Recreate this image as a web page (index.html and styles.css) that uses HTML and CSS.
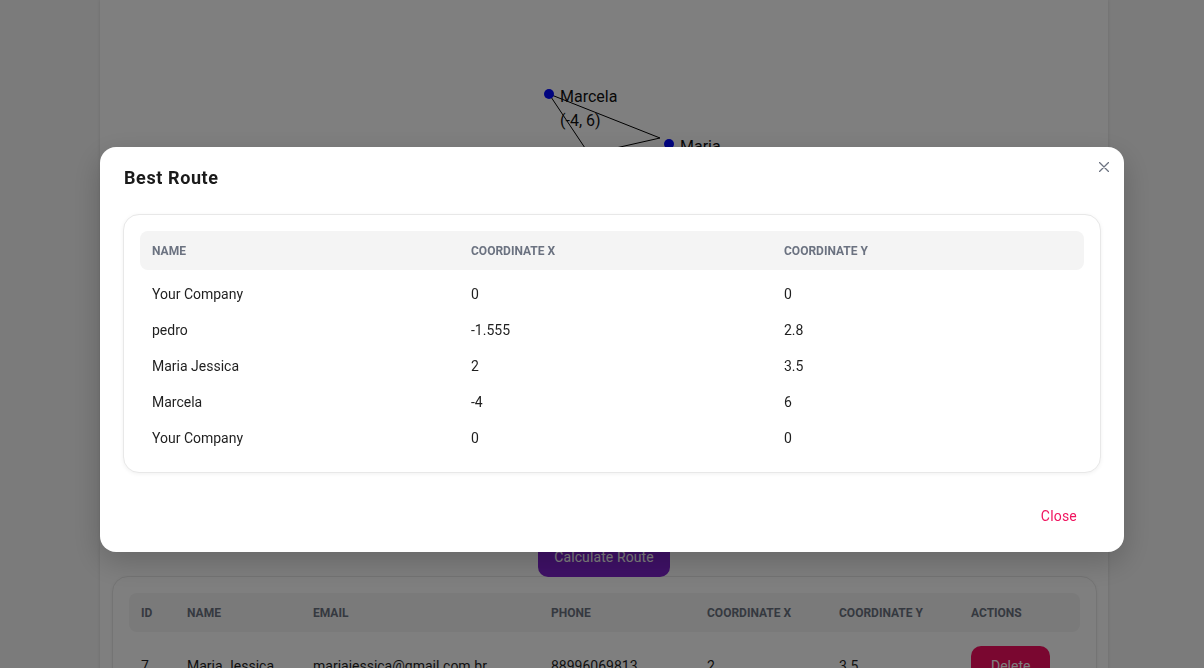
FILE: index.html
```html
<!DOCTYPE html>
<html lang="en">
<head>
<meta charset="utf-8">
<title>Best Route</title>
<link rel="stylesheet" href="styles.css">
</head>
<body>
<main class="page">
  <section class="main-card">
    <div class="chart">
      <svg width="1008" height="537" viewBox="0 0 1008 537">
        <polyline points="449,94 560,138 498,152" fill="none" stroke="#000" stroke-width="1"/>
        <line x1="449" y1="94" x2="529" y2="214" stroke="#000" stroke-width="1"/>
        <circle cx="449" cy="94" r="5" fill="#0008ff"/>
        <circle cx="569" cy="144" r="5" fill="#0008ff"/>
        <text x="460" y="102" class="chart-label">Marcela</text>
        <text x="460" y="126" class="chart-label">(-4, 6)</text>
        <text x="580" y="152" class="chart-label">Maria</text>
      </svg>
    </div>
    <div class="actions-bar">
      <button class="btn-primary">Calculate Route</button>
    </div>
    <div class="table-card bg-table">
      <div class="row head">
        <div>ID</div><div>Name</div><div>Email</div><div>Phone</div><div>Coordinate X</div><div>Coordinate Y</div><div>Actions</div>
      </div>
      <div class="row body">
        <div>7</div><div>Maria Jessica</div><div>mariajessica@gmail.com.br</div><div>88996069813</div><div>2</div><div>3.5</div><div><button class="btn-danger">Delete</button></div>
      </div>
    </div>
  </section>
</main>

<div class="overlay">
  <div class="modal">
    <button class="modal-x" aria-label="close">
      <svg width="10" height="10" viewBox="0 0 10 10"><path d="M0.5 0.5 L9.5 9.5 M9.5 0.5 L0.5 9.5" stroke="#6b7280" stroke-width="1.3" stroke-linecap="round"/></svg>
    </button>
    <h2 class="modal-title">Best Route</h2>
    <div class="modal-body">
      <div class="table-card route-table">
        <div class="row head">
          <div>Name</div><div>Coordinate X</div><div>Coordinate Y</div>
        </div>
        <div class="row body"><div>Your Company</div><div>0</div><div>0</div></div>
        <div class="row body"><div>pedro</div><div>-1.555</div><div>2.8</div></div>
        <div class="row body"><div>Maria Jessica</div><div>2</div><div>3.5</div></div>
        <div class="row body"><div>Marcela</div><div>-4</div><div>6</div></div>
        <div class="row body"><div>Your Company</div><div>0</div><div>0</div></div>
      </div>
    </div>
    <div class="modal-footer">
      <button class="btn-text">Close</button>
    </div>
  </div>
</div>
</body>
</html>
```
FILE: styles.css
```css
* { box-sizing: border-box; }
html, body { margin: 0; padding: 0; }
body {
  background: #f6f6f6;
  font-family: Roboto, "Liberation Sans", sans-serif;
  color: #1f1f1f;
  height: 668px;
  overflow: hidden;
}
.page {
  display: flex;
  justify-content: flex-start;
  padding-left: 100px;
}
.main-card {
  width: 1008px;
  background: #fff;
  box-shadow: 0 0 3px rgba(0,0,0,0.12);
  min-height: 800px;
}
.chart { height: 537px; }
.chart svg { display: block; }
.chart-label { font-family: Roboto, sans-serif; font-size: 16px; fill: #111; }
.actions-bar { display: flex; justify-content: center; }
.btn-primary {
  height: 40px;
  padding: 0 16px;
  border: none;
  border-radius: 10px;
  background: #7e22ce;
  color: #fff;
  font-family: inherit;
  font-size: 14px;
  letter-spacing: 0.1px;
}
.bg-table { margin: -1px 11px 0 12px; }

.table-card {
  border: 1px solid #e8e8e8;
  border-radius: 16px;
  padding: 16px;
  background: #fff;
  box-shadow: 0 1px 4px rgba(0,0,0,0.06);
}
.row { display: grid; align-items: center; }
.row > div { padding: 0 12px; }
.row.head {
  background: #f4f4f4;
  border-radius: 8px;
  height: 39px;
  font-size: 12px;
  font-weight: 700;
  text-transform: uppercase;
  color: #6b7280;
  margin-bottom: 6px;
}
.row.body { font-size: 14px; color: #1f1f1f; }
.bg-table .row { grid-template-columns: 46px 126px 238px 156px 132px 132px 1fr; }
.bg-table .row.body { height: 56px; }
.btn-danger {
  height: 40px;
  padding: 0 20px;
  border: none;
  border-radius: 10px;
  background: #f50f60;
  color: #fff;
  font-family: inherit;
  font-size: 14px;
}

.overlay {
  position: fixed;
  inset: 0;
  background: rgba(0,0,0,0.5);
  display: flex;
  align-items: flex-start;
  padding: 147px 0 0 100px;
}
.modal {
  position: relative;
  width: 1024px;
  background: #fff;
  border-radius: 16px;
  box-shadow: 0 10px 30px rgba(0,0,0,0.2);
}
.modal-x {
  position: absolute;
  top: 15px;
  right: 15px;
  width: 10px;
  height: 10px;
  padding: 0;
  border: none;
  background: transparent;
  display: flex;
}
.modal-title {
  margin: 0;
  padding: 19px 24px 0;
  font-size: 18px;
  line-height: 24px;
  font-weight: 700;
  color: #1a1a1a;
  letter-spacing: 0.6px;
}
.modal-body { padding: 24px 23px 0; }
.route-table .row { grid-template-columns: 319px 313px 1fr; }
.route-table .row.body { height: 36px; }
.modal-footer {
  display: flex;
  justify-content: flex-end;
  padding: 25px 24px 18px;
}
.btn-text {
  height: 36px;
  padding: 0 23px;
  border: none;
  background: transparent;
  color: #f0145f;
  font-family: inherit;
  font-size: 14px;
  letter-spacing: 0.2px;
}
```
